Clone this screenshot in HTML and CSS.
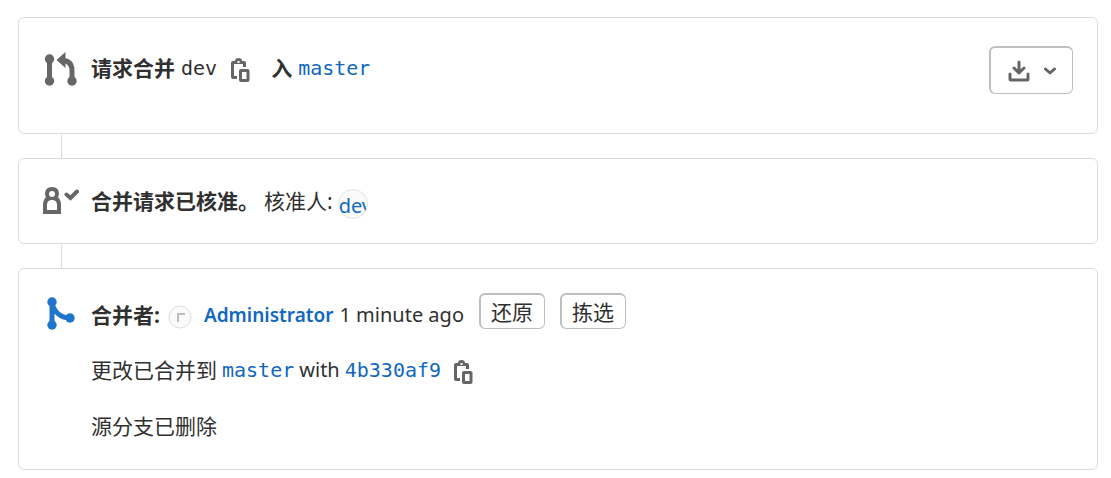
FILE: index.html
```html
<!DOCTYPE html>
<html lang="zh-CN">
<head>
  <meta charset="UTF-8">
  <meta name="viewport" content="width=device-width, initial-scale=1.0">
  <title>合并请求</title>
  <link rel="stylesheet" href="styles.css">
</head>
<body>
  <main class="mr-widget">
    <section class="card source">
      <svg class="status-icon" viewBox="0 0 36 36" aria-hidden="true">
        <path d="M6.500 7V29M29 29V19Q29 9 20 8.500" fill="none" stroke="#666" stroke-width="5"/>
        <circle cx="6.500" cy="7" r="4.700"/>
        <circle cx="6.500" cy="29" r="4.700"/>
        <circle cx="29" cy="29" r="4.700"/>
        <path d="M13.500 8 22.500 0V16Z"/>
      </svg>
      <div class="line">
        <strong>请求合并</strong>
        <code>dev</code>
        <button class="copy" type="button" aria-label="复制分支名称">
          <svg viewBox="0 0 20 24" aria-hidden="true">
            <path d="M6 21H2Q0 21 0 19V5Q0 3 2 3H4Q4 0 7.500 0Q11 0 11 3H13Q15 3 15 5V9H12V6H3V18H6Z"/>
            <path class="hole" d="M6.500 3H8.500V5H6.500Z"/>
            <path d="M10 11H16.500Q18.500 11 18.500 13V22Q18.500 24 16.500 24H10Q8 24 8 22V13Q8 11 10 11ZM11 14V21H15.500V14Z" fill-rule="evenodd"/>
          </svg>
        </button>
        <strong class="into">入</strong>
        <a href="#master"><code>master</code></a>
      </div>
      <button class="download" type="button" aria-label="下载">
        <svg class="download-icon" viewBox="0 0 22 22" aria-hidden="true">
          <path d="M11 2V13M6 8 11 13 16 8M2 14V19Q2 20 3 20H19Q20 20 20 19V14"/>
        </svg>
        <svg class="chevron" viewBox="0 0 12 8" aria-hidden="true">
          <path d="M1.500 2 6 6 10.500 2"/>
        </svg>
      </button>
    </section>

    <section class="card approval">
      <svg class="status-icon" viewBox="0 0 36 36" aria-hidden="true">
        <path d="M0 31V22Q0 17 3 14Q2 12 2 11Q2 4 9 4Q16 4 16 11Q16 12 15 14Q18 17 18 22V31ZM9 8A3 3 0 0 0 9 14A3 3 0 0 0 9 8ZM4 27H14V22Q14 17 9 17Q4 17 4 22Z" fill-rule="evenodd"/>
        <path d="M23.500 11.500 27.500 15 34 8.500" fill="none" stroke="#666" stroke-width="4" stroke-linecap="round"/>
      </svg>
      <div class="line">
        <strong>合并请求已核准。</strong>
        <span>核准人:</span>
        <a class="avatar" href="#dev">dev</a>
      </div>
    </section>

    <section class="card merged">
      <svg class="status-icon blue" viewBox="0 0 36 36" aria-hidden="true">
        <path d="M9 6V29M9 8Q14 22 27 22" fill="none" stroke="#1f75cb" stroke-width="5"/>
        <circle cx="9" cy="6" r="4.700"/>
        <circle cx="9" cy="29" r="4.700"/>
        <circle cx="27" cy="22" r="4.700"/>
      </svg>
      <div class="details">
        <div class="merge-row">
          <div class="line merged-by">
            <strong>合并者:</strong>
            <svg class="author-avatar" viewBox="0 0 24 24" aria-hidden="true">
              <circle cx="12" cy="12" r="11"/>
              <path d="M10 17V9H17"/>
            </svg>
            <a class="author" href="#administrator">Administrator</a>
            <time class="latin">1 minute ago</time>
          </div>
          <button class="action" type="button">还原</button>
          <button class="action" type="button">拣选</button>
        </div>
        <p class="line commit">
          <span>更改已合并到</span>
          <a href="#master"><code>master</code></a>
          <span class="latin">with</span>
          <a href="#commit"><code>4b330af9</code></a>
          <button class="copy" type="button" aria-label="复制提交 SHA">
            <svg viewBox="0 0 20 24" aria-hidden="true">
              <path d="M6 21H2Q0 21 0 19V5Q0 3 2 3H4Q4 0 7.500 0Q11 0 11 3H13Q15 3 15 5V9H12V6H3V18H6Z"/>
              <path class="hole" d="M6.500 3H8.500V5H6.500Z"/>
              <path d="M10 11H16.500Q18.500 11 18.500 13V22Q18.500 24 16.500 24H10Q8 24 8 22V13Q8 11 10 11ZM11 14V21H15.500V14Z" fill-rule="evenodd"/>
            </svg>
          </button>
        </p>
        <p class="line">源分支已删除</p>
      </div>
    </section>
  </main>
</body>
</html>
```
FILE: styles.css
```css
* {
  box-sizing: border-box;
}

body {
  margin: 0;
  padding: 17px 13px 8px 18px;
  background: #fff;
  color: #303030;
  font-family: "Noto Sans", "Noto Sans CJK SC", sans-serif;
  font-size: 21px;
  line-height: 32px;
}

a {
  color: #1068bf;
  text-decoration: none;
}

p {
  margin: 0;
}

svg {
  display: block;
  flex: none;
  fill: #666;
}

code {
  font-family: "DejaVu Sans Mono", monospace;
  font-size: 20px;
}

button {
  background: #fff;
  color: inherit;
  font: inherit;
  cursor: pointer;
}

.mr-widget {
  display: flex;
  flex-direction: column;
  gap: 24px;
}

.card {
  position: relative;
  display: flex;
  align-items: flex-start;
  gap: 12px;
  padding: 24px;
  border: 1px solid #dbdbdb;
  border-radius: 6px;
}

/* vertical line joining a card to the one above */
.card + .card::before {
  content: "";
  position: absolute;
  bottom: 100%;
  left: 42px;
  height: 24px;
  border-left: 1px solid #dbdbdb;
}

.status-icon {
  width: 36px;
  height: 36px;
}

.status-icon.blue {
  fill: #1f75cb;
}

.line {
  display: flex;
  align-items: center;
  gap: 6px;
  min-height: 32px;
  white-space: nowrap;
}

.source {
  padding-top: 28px;
  padding-bottom: 39px;
}

.source .status-icon {
  margin-top: 6px;
}

.source .line {
  margin-top: 5px;
}

.copy {
  margin: 4px 8px 0;
  padding: 0;
  border: 0;
}

.copy svg {
  width: 20px;
  height: 24px;
}

.copy .hole {
  fill: #fff;
}

.into {
  margin-left: 6px;
}

.download {
  display: flex;
  align-items: center;
  gap: 14px;
  height: 48px;
  margin-left: auto;
  padding: 0 16px 0 17px;
  border: 1px solid #bfbfbf;
  border-width: 2px 1px 1px 2px;
  border-radius: 6px;
}

.download svg {
  fill: none;
  stroke: #666;
  stroke-width: 3;
  stroke-linecap: round;
  stroke-linejoin: round;
}

.download-icon {
  width: 22px;
  height: 22px;
}

.chevron {
  width: 12px;
  height: 8px;
}

.approval .line {
  height: 36px;
  gap: 5px;
}

.avatar {
  width: 30px;
  height: 30px;
  margin-top: 6px;
  overflow: hidden;
  border: 1px solid #e3e3e3;
  border-radius: 50%;
  background: #fafafa;
  font-size: 20px;
}

.latin {
  font-size: 20px;
}

.details {
  display: flex;
  flex-direction: column;
  gap: 24px;
}

.merge-row {
  display: flex;
  align-items: flex-start;
  gap: 15px;
}

.merged {
  padding-bottom: 27px;
}

.merged .status-icon {
  margin-top: 3px;
}

.merged-by {
  height: 36px;
  margin-top: 4px;
  margin-bottom: -4px;
}

.commit {
  gap: 5px;
}

.author-avatar {
  width: 24px;
  height: 24px;
  margin: 4px 6px 0 2px;
}

.author-avatar circle {
  fill: #fafafa;
  stroke: #ddd;
}

.author-avatar path {
  fill: none;
  stroke: #bbb;
  stroke-width: 2;
}

.author {
  font-size: 19px;
  font-weight: 600;
}

.action {
  height: 36px;
  padding: 0 11px 0 10px;
  border: 1px solid #bfbfbf;
  border-width: 2px 1px 1px 2px;
  border-radius: 6px;
}
```
